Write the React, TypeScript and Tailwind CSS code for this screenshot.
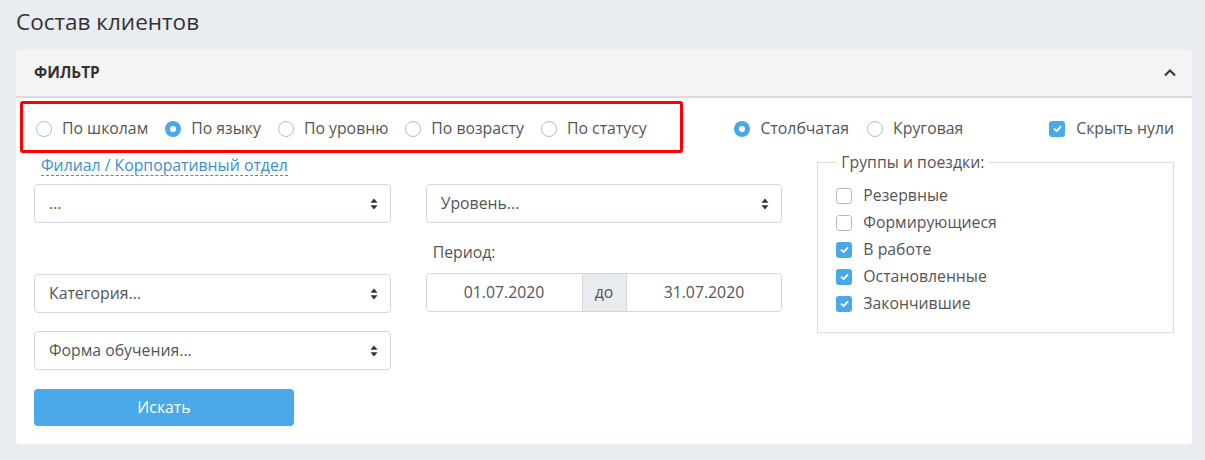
import React from "react";

const Radio = ({ checked, hover, label }: { checked?: boolean; hover?: boolean; label: string }) => (
  <label className="flex items-center gap-[10px] text-[15.8px] text-[#555]">
    {checked ? (
      <span className="w-4 h-4 rounded-full bg-[#4aa8e8] flex items-center justify-center">
        <span className="w-[6px] h-[6px] rounded-full bg-white" />
      </span>
    ) : (
      <span className={`w-4 h-4 rounded-full border bg-white ${hover ? "border-[#9cc6ea]" : "border-[#b8bcc2]"}`} />
    )}
    <span>{label}</span>
  </label>
);

const Check = ({ checked, label }: { checked?: boolean; label: string }) => (
  <label className="flex items-center gap-[11px] text-[15.8px] text-[#555] h-[27px]">
    {checked ? (
      <span className="w-4 h-4 rounded-[3px] bg-[#4aa8e8] flex items-center justify-center">
        <svg width="9" height="8" viewBox="0 0 9 8">
          <path d="M1.5 4.2 L3.6 6.2 L7.5 1.8" stroke="white" strokeWidth="1.8" fill="none" strokeLinecap="round" strokeLinejoin="round" />
        </svg>
      </span>
    ) : (
      <span className="w-4 h-4 rounded-[3px] border border-[#b8bcc2] bg-white" />
    )}
    <span>{label}</span>
  </label>
);

const Select = ({ text }: { text: string }) => (
  <div className="h-[39px] border border-[#d3d8de] rounded-[4px] bg-white flex items-center justify-between pl-[14px] pr-[12px] text-[15.8px] text-[#555]">
    <span>{text}</span>
    <svg width="8" height="12" viewBox="0 0 8 12">
      <path d="M4 0.5 L7.5 4.8 L0.5 4.8 Z" fill="#333" />
      <path d="M4 11.5 L7.5 7.2 L0.5 7.2 Z" fill="#333" />
    </svg>
  </div>
);

export default function App() {
  return (
    <div className="min-h-[460px] bg-[#e9ecf1] pl-4 pr-[13px] pb-4" style={{ fontFamily: "'Open Sans', sans-serif" }}>
      <div className="h-[50px] pt-[6px]">
        <h1 className="text-[22.5px] text-[#333] leading-[32px]">Состав клиентов</h1>
      </div>
      <div className="bg-white rounded-[4px]">
        <div className="h-[48px] bg-[#f4f4f4] border-b-2 border-[#dcdcdc] rounded-t-[4px] flex items-center justify-between px-[18px]">
          <span className="text-[15.4px] font-bold text-[#333]">ФИЛЬТР</span>
          <svg width="14" height="10" viewBox="0 0 14 10" className="-mr-[3px]">
            <path d="M2 7.5 L7 2.5 L12 7.5" stroke="#333" strokeWidth="2" fill="none" />
          </svg>
        </div>
        <div className="px-[18px] pb-[18px] pt-[3px]">
          <div className="flex items-center">
            <div className="-ml-[14px] h-[52px] border-[3px] border-[#ff0000] rounded-[3px] flex items-center gap-[17px] pl-[13px] pr-[33px] pt-[4px]">
              <Radio hover label="По школам" />
              <Radio checked label="По языку" />
              <Radio label="По уровню" />
              <Radio label="По возрасту" />
              <Radio label="По статусу" />
            </div>
            <div className="ml-auto mt-[4px] flex items-center gap-[18px]">
              <Radio checked label="Столбчатая" />
              <Radio label="Круговая" />
            </div>
            <div className="ml-[86px] mt-[4px] flex items-center">
              <Check checked label="Скрыть нули" />
            </div>
          </div>
          <div className="grid grid-cols-3 gap-x-[35px] mt-[2px]">
            <div className="flex flex-col">
              <div className="h-[21px] -mt-[2px] pl-[7px]">
                <span className="text-[15.8px] leading-[20px] text-[#3a8fd0] border-b border-dashed border-[#3a8fd0] inline-block">Филиал / Корпоративный отдел</span>
              </div>
              <div className="mt-[10px]"><Select text="..." /></div>
              <div className="mt-[51px]"><Select text="Категория..." /></div>
              <div className="mt-[18px]"><Select text="Форма обучения..." /></div>
              <button className="mt-[19px] w-[260px] h-[37px] rounded-[4px] bg-[#4aa9e9] text-white text-[15.8px]">Искать</button>
            </div>
            <div className="flex flex-col">
              <div className="mt-[29px]"><Select text="Уровень..." /></div>
              <div className="mt-[19px] pl-[7px] text-[15.8px] text-[#555] leading-[20px]">Период:</div>
              <div className="mt-[11px] h-[39px] flex border border-[#d3d8de] rounded-[4px] text-[15.8px] text-[#555]">
                <div className="flex-1 flex items-center justify-center bg-white rounded-l-[4px]">01.07.2020</div>
                <div className="w-[45px] flex items-center justify-center bg-[#e9ecef] border-x border-[#d3d8de]">до</div>
                <div className="flex-1 flex items-center justify-center bg-white rounded-r-[4px]">31.07.2020</div>
              </div>
            </div>
            <div>
              <fieldset className="-mt-[3px] border border-[#dcdcdc] pl-[18px] pr-4 pb-[15px] pt-[10px]">
                <legend className="px-[5px] text-[15.8px] text-[#555] leading-[20px]">Группы и поездки:</legend>
                <Check label="Резервные" />
                <Check label="Формирующиеся" />
                <Check checked label="В работе" />
                <Check checked label="Остановленные" />
                <Check checked label="Закончившие" />
              </fieldset>
            </div>
          </div>
        </div>
      </div>
    </div>
  );
}
